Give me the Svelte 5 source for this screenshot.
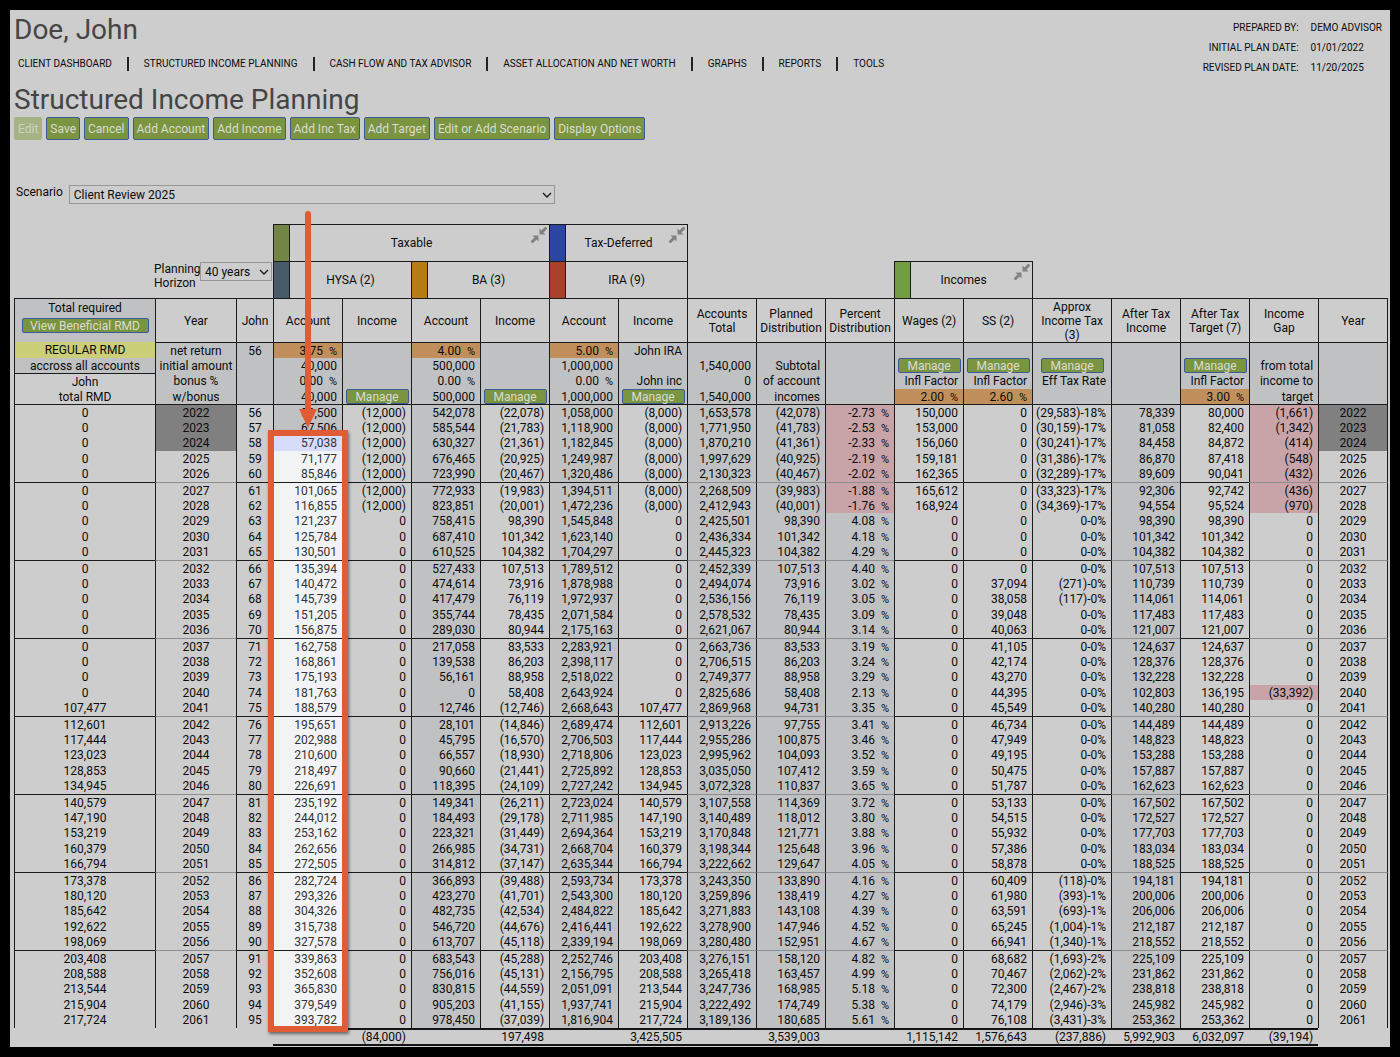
<script lang="ts">
	const NAV = [
		'Client Dashboard',
		'Structured Income Planning',
		'Cash Flow and Tax Advisor',
		'Asset Allocation and Net Worth',
		'Graphs',
		'Reports',
		'Tools'
	];

	const ACTIONS = [
		'Edit',
		'Save',
		'Cancel',
		'Add Account',
		'Add Income',
		'Add Inc Tax',
		'Add Target',
		'Edit or Add Scenario',
		'Display Options'
	];

	interface Column {
		key: string;
		label: string;
		width: number;
		center?: boolean;
		shaded?: boolean;
		faint?: boolean; // lighter rule between five-year groups
	}

	const COLUMNS: Column[] = [
		{ key: 'rmd', label: '', width: 141, center: true },
		{ key: 'year', label: 'Year', width: 81, center: true, faint: true },
		{ key: 'age', label: 'John', width: 37, center: true },
		{ key: 'hysa', label: 'Account', width: 69, shaded: true },
		{ key: 'hysaInc', label: 'Income', width: 69 },
		{ key: 'ba', label: 'Account', width: 69, shaded: true },
		{ key: 'baInc', label: 'Income', width: 69 },
		{ key: 'ira', label: 'Account', width: 69, shaded: true },
		{ key: 'iraInc', label: 'Income', width: 69 },
		{ key: 'total', label: 'Accounts Total', width: 69, shaded: true, faint: true },
		{ key: 'planned', label: 'Planned Distribution', width: 69, shaded: true, faint: true },
		{ key: 'percent', label: 'Percent Distribution', width: 69, shaded: true, faint: true },
		{ key: 'wages', label: 'Wages (2)', width: 69 },
		{ key: 'ss', label: 'SS (2)', width: 69 },
		{ key: 'tax', label: 'Approx Income Tax (3)', width: 79 },
		{ key: 'net', label: 'After Tax Income', width: 69, shaded: true, faint: true },
		{ key: 'target', label: 'After Tax Target (7)', width: 69 },
		{ key: 'gap', label: 'Income Gap', width: 69, faint: true },
		{ key: 'yearEnd', label: 'Year', width: 70, center: true, faint: true }
	];

	const INTRO = [
		'REGULAR RMD|net return|56|3.75%||4.00%||5.00%|John IRA||||||||||',
		'accross all accounts|initial amount||40,000||500,000||1,000,000||1,540,000|Subtotal||Manage|Manage|Manage||Manage|from total|',
		'John|bonus %||0.00%||0.00%||0.00%|John inc|0|of account||Infl Factor|Infl Factor|Eff Tax Rate||Infl Factor|income to|',
		'total RMD|w/bonus||40,000|Manage|500,000|Manage|1,000,000|Manage|1,540,000|incomes||2.00%|2.60%|||3.00%|target|'
	].map((line) => line.split('|'));

	// rmd, hysa, hysaInc, ba, baInc, ira, iraInc, total, planned, percent, wages, ss, tax, net, target, gap
	const PLAN = `
0 53,500 (12,000) 542,078 (22,078) 1,058,000 (8,000) 1,653,578 (42,078) -2.73% 150,000 0 (29,583)-18% 78,339 80,000 (1,661)
0 67,506 (12,000) 585,544 (21,783) 1,118,900 (8,000) 1,771,950 (41,783) -2.53% 153,000 0 (30,159)-17% 81,058 82,400 (1,342)
0 57,038 (12,000) 630,327 (21,361) 1,182,845 (8,000) 1,870,210 (41,361) -2.33% 156,060 0 (30,241)-17% 84,458 84,872 (414)
0 71,177 (12,000) 676,465 (20,925) 1,249,987 (8,000) 1,997,629 (40,925) -2.19% 159,181 0 (31,386)-17% 86,870 87,418 (548)
0 85,846 (12,000) 723,990 (20,467) 1,320,486 (8,000) 2,130,323 (40,467) -2.02% 162,365 0 (32,289)-17% 89,609 90,041 (432)
0 101,065 (12,000) 772,933 (19,983) 1,394,511 (8,000) 2,268,509 (39,983) -1.88% 165,612 0 (33,323)-17% 92,306 92,742 (436)
0 116,855 (12,000) 823,851 (20,001) 1,472,236 (8,000) 2,412,943 (40,001) -1.76% 168,924 0 (34,369)-17% 94,554 95,524 (970)
0 121,237 0 758,415 98,390 1,545,848 0 2,425,501 98,390 4.08% 0 0 0-0% 98,390 98,390 0
0 125,784 0 687,410 101,342 1,623,140 0 2,436,334 101,342 4.18% 0 0 0-0% 101,342 101,342 0
0 130,501 0 610,525 104,382 1,704,297 0 2,445,323 104,382 4.29% 0 0 0-0% 104,382 104,382 0
0 135,394 0 527,433 107,513 1,789,512 0 2,452,339 107,513 4.40% 0 0 0-0% 107,513 107,513 0
0 140,472 0 474,614 73,916 1,878,988 0 2,494,074 73,916 3.02% 0 37,094 (271)-0% 110,739 110,739 0
0 145,739 0 417,479 76,119 1,972,937 0 2,536,156 76,119 3.05% 0 38,058 (117)-0% 114,061 114,061 0
0 151,205 0 355,744 78,435 2,071,584 0 2,578,532 78,435 3.09% 0 39,048 0-0% 117,483 117,483 0
0 156,875 0 289,030 80,944 2,175,163 0 2,621,067 80,944 3.14% 0 40,063 0-0% 121,007 121,007 0
0 162,758 0 217,058 83,533 2,283,921 0 2,663,736 83,533 3.19% 0 41,105 0-0% 124,637 124,637 0
0 168,861 0 139,538 86,203 2,398,117 0 2,706,515 86,203 3.24% 0 42,174 0-0% 128,376 128,376 0
0 175,193 0 56,161 88,958 2,518,022 0 2,749,377 88,958 3.29% 0 43,270 0-0% 132,228 132,228 0
0 181,763 0 0 58,408 2,643,924 0 2,825,686 58,408 2.13% 0 44,395 0-0% 102,803 136,195 (33,392)
107,477 188,579 0 12,746 (12,746) 2,668,643 107,477 2,869,968 94,731 3.35% 0 45,549 0-0% 140,280 140,280 0
112,601 195,651 0 28,101 (14,846) 2,689,474 112,601 2,913,226 97,755 3.41% 0 46,734 0-0% 144,489 144,489 0
117,444 202,988 0 45,795 (16,570) 2,706,503 117,444 2,955,286 100,875 3.46% 0 47,949 0-0% 148,823 148,823 0
123,023 210,600 0 66,557 (18,930) 2,718,806 123,023 2,995,962 104,093 3.52% 0 49,195 0-0% 153,288 153,288 0
128,853 218,497 0 90,660 (21,441) 2,725,892 128,853 3,035,050 107,412 3.59% 0 50,475 0-0% 157,887 157,887 0
134,945 226,691 0 118,395 (24,109) 2,727,242 134,945 3,072,328 110,837 3.65% 0 51,787 0-0% 162,623 162,623 0
140,579 235,192 0 149,341 (26,211) 2,723,024 140,579 3,107,558 114,369 3.72% 0 53,133 0-0% 167,502 167,502 0
147,190 244,012 0 184,493 (29,178) 2,711,985 147,190 3,140,489 118,012 3.80% 0 54,515 0-0% 172,527 172,527 0
153,219 253,162 0 223,321 (31,449) 2,694,364 153,219 3,170,848 121,771 3.88% 0 55,932 0-0% 177,703 177,703 0
160,379 262,656 0 266,985 (34,731) 2,668,704 160,379 3,198,344 125,648 3.96% 0 57,386 0-0% 183,034 183,034 0
166,794 272,505 0 314,812 (37,147) 2,635,344 166,794 3,222,662 129,647 4.05% 0 58,878 0-0% 188,525 188,525 0
173,378 282,724 0 366,893 (39,488) 2,593,734 173,378 3,243,350 133,890 4.16% 0 60,409 (118)-0% 194,181 194,181 0
180,120 293,326 0 423,270 (41,701) 2,543,300 180,120 3,259,896 138,419 4.27% 0 61,980 (393)-1% 200,006 200,006 0
185,642 304,326 0 482,735 (42,534) 2,484,822 185,642 3,271,883 143,108 4.39% 0 63,591 (693)-1% 206,006 206,006 0
192,622 315,738 0 546,720 (44,676) 2,416,441 192,622 3,278,900 147,946 4.52% 0 65,245 (1,004)-1% 212,187 212,187 0
198,069 327,578 0 613,707 (45,118) 2,339,194 198,069 3,280,480 152,951 4.67% 0 66,941 (1,340)-1% 218,552 218,552 0
203,408 339,863 0 683,543 (45,288) 2,252,746 203,408 3,276,151 158,120 4.82% 0 68,682 (1,693)-2% 225,109 225,109 0
208,588 352,608 0 756,016 (45,131) 2,156,795 208,588 3,265,418 163,457 4.99% 0 70,467 (2,062)-2% 231,862 231,862 0
213,544 365,830 0 830,815 (44,559) 2,051,091 213,544 3,247,736 168,985 5.18% 0 72,300 (2,467)-2% 238,818 238,818 0
215,904 379,549 0 905,203 (41,155) 1,937,741 215,904 3,222,492 174,749 5.38% 0 74,179 (2,946)-3% 245,982 245,982 0
217,724 393,782 0 978,450 (37,039) 1,816,904 217,724 3,189,136 180,685 5.61% 0 76,108 (3,431)-3% 253,362 253,362 0`;

	const rows = PLAN.trim().split('\n').map((line, i) => {
		const [rmd, ...values] = line.split(' ');
		const year = String(2022 + i);
		return [rmd, year, String(56 + i), ...values, year];
	});

	const TOTALS = ['', '(84,000)', '', '197,498', '', '3,425,505', '', '3,539,003', '', '1,115,142', '1,576,643', '(237,886)', '5,992,903', '6,032,097', '(39,194)'];

	const isRate = (value: string) => /^-?[\d.]+%$/.test(value);

	function introClass(value: string, col: number, row: number) {
		const c = COLUMNS[col];
		return {
			center: c.center,
			plain: c.key === 'rmd' && row > 1,
			ruled: (c.key === 'rmd' ? row === 2 : row === 0),
			regular: c.key === 'rmd' && row === 0,
			editable: isRate(value) && row !== 2,
			holder: value === 'Manage'
		};
	}

	function planClass(value: string, col: number, row: number) {
		const c = COLUMNS[col];
		const past = row < 3;
		return {
			center: c.center,
			shaded: c.shaded,
			faint: c.faint && row > 0,
			ruled: row % 5 === 0,
			past: past && (c.key === 'year' || c.key === 'yearEnd'),
			short: (c.key === 'percent' && value.startsWith('-')) || (c.key === 'gap' && value !== '0'),
			lit: c.key === 'hysa' && row > 1,
			current: c.key === 'hysa' && row === 2
		};
	}
</script>

{#snippet collapse()}
	<button class="collapse" aria-label="Collapse group">
		<svg viewBox="0 0 16 16" width="16" height="16">
			<path d="M0.5 15.5 L5 11 M15.5 0.5 L11 5" stroke="#828282" stroke-width="3" />
			<path d="M7.5 8.5 V14.5 L1.5 8.5 Z M8.5 7.5 V1.5 L14.5 7.5 Z" fill="#828282" />
		</svg>
	</button>
{/snippet}

{#snippet chevron()}
	<svg class="chevron" viewBox="0 0 10 6" width="10" height="6" aria-hidden="true">
		<path d="M1 1 L5 5 L9 1" fill="none" stroke="#1c1c1c" stroke-width="1.4" />
	</svg>
{/snippet}

{#snippet amount(value: string)}
	{#if value === 'Manage'}
		<button class="manage">Manage</button>
	{:else if isRate(value)}
		{value.slice(0, -1)}<span class="pct">%</span>
	{:else}
		{value}
	{/if}
{/snippet}

<main class="page">
	<header>
		<div>
			<h1>Doe, John</h1>
			<nav>
				{#each NAV as item}
					<a href="#top">{item}</a>
				{/each}
			</nav>
		</div>
		<dl>
			<dt>Prepared by:</dt><dd>Demo Advisor</dd>
			<dt>Initial plan date:</dt><dd>01/01/2022</dd>
			<dt>Revised plan date:</dt><dd>11/20/2025</dd>
		</dl>
	</header>

	<h2>Structured Income Planning</h2>
	<div class="actions">
		{#each ACTIONS as action}
			<button disabled={action === 'Edit'}>{action}</button>
		{/each}
	</div>

	<div class="scenario">
		<label for="scenario">Scenario</label>
		<div class="picker">
			<select id="scenario"><option>Client Review 2025</option></select>
			{@render chevron()}
		</div>
	</div>

	<div class="sheet">
		<table>
			<colgroup>
				{#each COLUMNS as c}
					<col style="width: {c.width}px" />
				{/each}
			</colgroup>
			<thead>
				<tr class="groups">
					<td colspan="3" rowspan="2" class="corner">
						<div class="horizon">
							<label for="horizon">Planning Horizon</label>
							<div class="picker">
								<select id="horizon"><option>40 years</option></select>
								{@render chevron()}
							</div>
						</div>
					</td>
					<th colspan="4" class="boxed"><div class="group"><i class="swatch olive"></i><span>Taxable</span>{@render collapse()}</div></th>
					<th colspan="2" class="boxed"><div class="group"><i class="swatch blue"></i><span>Tax-Deferred</span>{@render collapse()}</div></th>
					<td colspan="10" class="edge"></td>
				</tr>
				<tr class="groups">
					<th colspan="2" class="boxed"><div class="group"><i class="swatch slate"></i><span>HYSA (2)</span></div></th>
					<th colspan="2" class="boxed"><div class="group"><i class="swatch amber"></i><span>BA (3)</span></div></th>
					<th colspan="2" class="boxed"><div class="group"><i class="swatch red"></i><span>IRA (9)</span></div></th>
					<td colspan="3" class="edge"></td>
					<th colspan="2" class="boxed"><div class="group"><i class="swatch green"></i><span>Incomes</span>{@render collapse()}</div></th>
					<td colspan="5" class="edge"></td>
				</tr>
				<tr class="labels">
					{#each COLUMNS as c}
						{#if c.key === 'rmd'}
							<th class="required">Total required<button class="manage wide">View Beneficial RMD</button></th>
						{:else}
							<th>{c.label}</th>
						{/if}
					{/each}
				</tr>
			</thead>
			<tbody class="intro">
				{#each INTRO as line, r}
					<tr>
						{#each line as value, c}
							<td class={introClass(value, c, r)}>{@render amount(value)}</td>
						{/each}
					</tr>
				{/each}
			</tbody>
			{#each { length: 8 } as _, g}
				<tbody>
					{#each rows.slice(g * 5, g * 5 + 5) as line, r}
						<tr>
							{#each line as value, c}
								<td class={planClass(value, c, g * 5 + r)}>{@render amount(value)}</td>
							{/each}
						</tr>
					{/each}
				</tbody>
			{/each}
			<tfoot>
				<tr>
					<td colspan="3"></td>
					{#each TOTALS as total}
						<td class="sum">{total}</td>
					{/each}
					<td></td>
				</tr>
			</tfoot>
		</table>

		<svg class="arrow" viewBox="0 0 18 218" width="18" height="218" aria-hidden="true">
			<path d="M9 3 V200" stroke="#e05c35" stroke-width="6" stroke-linecap="round" />
			<path d="M0 198 H18 L9 217 Z" fill="#e05c35" />
		</svg>
		<div class="callout"></div>
	</div>
</main>

<style>
	:global(body) {
		background: #000;
	}

	.page {
		margin: 10px;
		padding: 1px 2px 1px 4px;
		background: #cdcdcd;
		color: #0c0c0c;
		font-family: Roboto, 'Liberation Sans', sans-serif;
		font-size: 12px;
		line-height: 14px;
	}

	.page :is(button, select) {
		font: inherit;
		color: inherit;
	}

	header {
		display: flex;
		justify-content: space-between;
	}

	h1,
	h2 {
		margin: 0;
		color: #454545;
		font-size: 28px;
		font-weight: 400;
		line-height: 38px;
	}

	h2 {
		line-height: 42px;
	}

	nav {
		display: flex;
		align-items: center;
		height: 30px;
		padding-left: 4px;
		font-size: 10px;
		text-transform: uppercase;
	}

	nav a {
		color: inherit;
		text-decoration: none;
	}

	nav a + a {
		margin-left: 15px;
		padding-left: 15px;
		border-left: 2px solid #222;
	}

	dl {
		display: grid;
		grid-template-columns: auto auto;
		column-gap: 12px;
		align-content: start;
		margin: 0;
		padding: 7px 6px 0 0;
		font-size: 10px;
		line-height: 20px;
		text-transform: uppercase;
	}

	dt {
		text-align: right;
	}

	dd {
		margin: 0;
	}

	.actions {
		display: flex;
		gap: 4px;
		margin-top: -4px;
	}

	.actions button,
	.page .manage {
		border: 1px solid #3a5a9a;
		border-radius: 2px;
		background: #7a9440;
		color: #dadcd2;
	}

	.actions button {
		height: 23px;
		padding: 0 3px;
	}

	.actions button:disabled {
		border-color: #a5b384;
		background: #a5b384;
		color: #ccd3bd;
	}

	.scenario {
		display: flex;
		gap: 6px;
		margin: 45px 0 20px;
		padding-left: 2px;
	}

	.picker {
		position: relative;
	}

	select {
		display: block;
		appearance: none;
		height: 19px;
		padding: 0 4px;
		border: 1px solid #979797;
		border-radius: 0;
		background: #cdcdcd;
	}

	.chevron {
		position: absolute;
		top: 7px;
		right: 3px;
		pointer-events: none;
	}

	.scenario select {
		width: 486px;
	}

	.sheet {
		position: relative;
	}

	table {
		width: 100%;
		table-layout: fixed;
		border-collapse: separate;
		border-spacing: 0;
	}

	th,
	td {
		box-sizing: border-box;
		padding: 0;
		font-weight: 400;
	}

	.groups > * {
		height: 37px;
	}

	.corner {
		vertical-align: top;
	}

	.boxed {
		border-top: 1px solid #1b1b1b;
		border-left: 1px solid #1b1b1b;
	}

	.edge {
		border-left: 1px solid #1b1b1b;
	}

	.group {
		display: flex;
		align-items: center;
		height: 36px;
	}

	.group span {
		flex: 1;
	}

	.swatch {
		width: 15px;
		height: 36px;
		border-right: 1px solid #1b1b1b;
	}

	.olive {
		background: #728545;
	}

	.blue {
		background: #2b46a0;
	}

	.slate {
		background: #485b69;
	}

	.amber {
		background: #b67d17;
	}

	.red {
		background: #a8402c;
	}

	.green {
		background: #739d43;
	}

	.collapse {
		align-self: flex-start;
		width: 16px;
		height: 16px;
		margin: 2px 2px 0 -2px;
		padding: 0;
		border: 0;
		background: none;
	}

	.collapse svg {
		display: block;
	}

	.horizon {
		display: flex;
		justify-content: flex-end;
		align-items: flex-start;
		padding: 38px 1px 0 0;
	}

	.horizon label {
		width: 46px;
	}

	.horizon select {
		width: 72px;
	}

	.labels th {
		height: 44px;
		padding: 0 3px;
		border-top: 1px solid #1b1b1b;
		border-left: 1px solid #1b1b1b;
		text-align: center;
	}

	.labels .required {
		padding-top: 2px;
		background: #bfc1c3;
		vertical-align: top;
	}

	tbody td {
		height: 15px;
		padding-right: 5px;
		border-left: 1px solid #1b1b1b;
		text-align: right;
		white-space: nowrap;
	}

	tbody tr:nth-child(odd) td {
		height: 16px;
	}

	.labels th:last-child,
	tbody td:last-child {
		border-right: 1px solid #1b1b1b;
	}

	.intro td {
		background: #bfc1c3;
	}

	tbody .center {
		padding: 0;
		text-align: center;
	}

	tbody .ruled {
		border-top: 1px solid #1b1b1b;
	}

	tbody .faint {
		border-top-color: #8d8e8f;
	}

	.intro .plain {
		background: #cdcdcd;
	}

	.intro .regular {
		background: #cbcf78;
	}

	.intro .editable {
		background: #c08f5b;
	}

	.shaded {
		background: #bfc1c3;
	}

	.past {
		background: #808080;
	}

	.short {
		background: #c8a3a8;
	}

	.lit {
		background: #f1f3f5;
		color: #333;
	}

	.current {
		background: #d7dcfa;
	}

	.pct {
		margin-left: 6px;
		font-size: 11px;
		line-height: 1px;
	}

	.intro .holder {
		padding: 0;
		text-align: center;
	}

	.manage {
		display: block;
		width: 63px;
		height: 15px;
		margin: 0 auto;
		padding: 0;
		line-height: 13px;
	}

	.wide {
		width: 127px;
		margin-top: 3px;
	}

	tfoot td {
		height: 18px;
	}

	tfoot .sum {
		padding-right: 5px;
		border-top: 2px solid #141414;
		border-bottom: 2px solid #141414;
		text-align: right;
	}

	.arrow {
		position: absolute;
		top: -13px;
		left: 285px;
	}

	.callout {
		position: absolute;
		top: 206px;
		bottom: 14px;
		left: 254px;
		box-sizing: border-box;
		width: 80px;
		border: 6px solid #e05c35;
		box-shadow: 1px 2px 3px rgba(0, 0, 0, 0.5);
		pointer-events: none;
	}
</style>
